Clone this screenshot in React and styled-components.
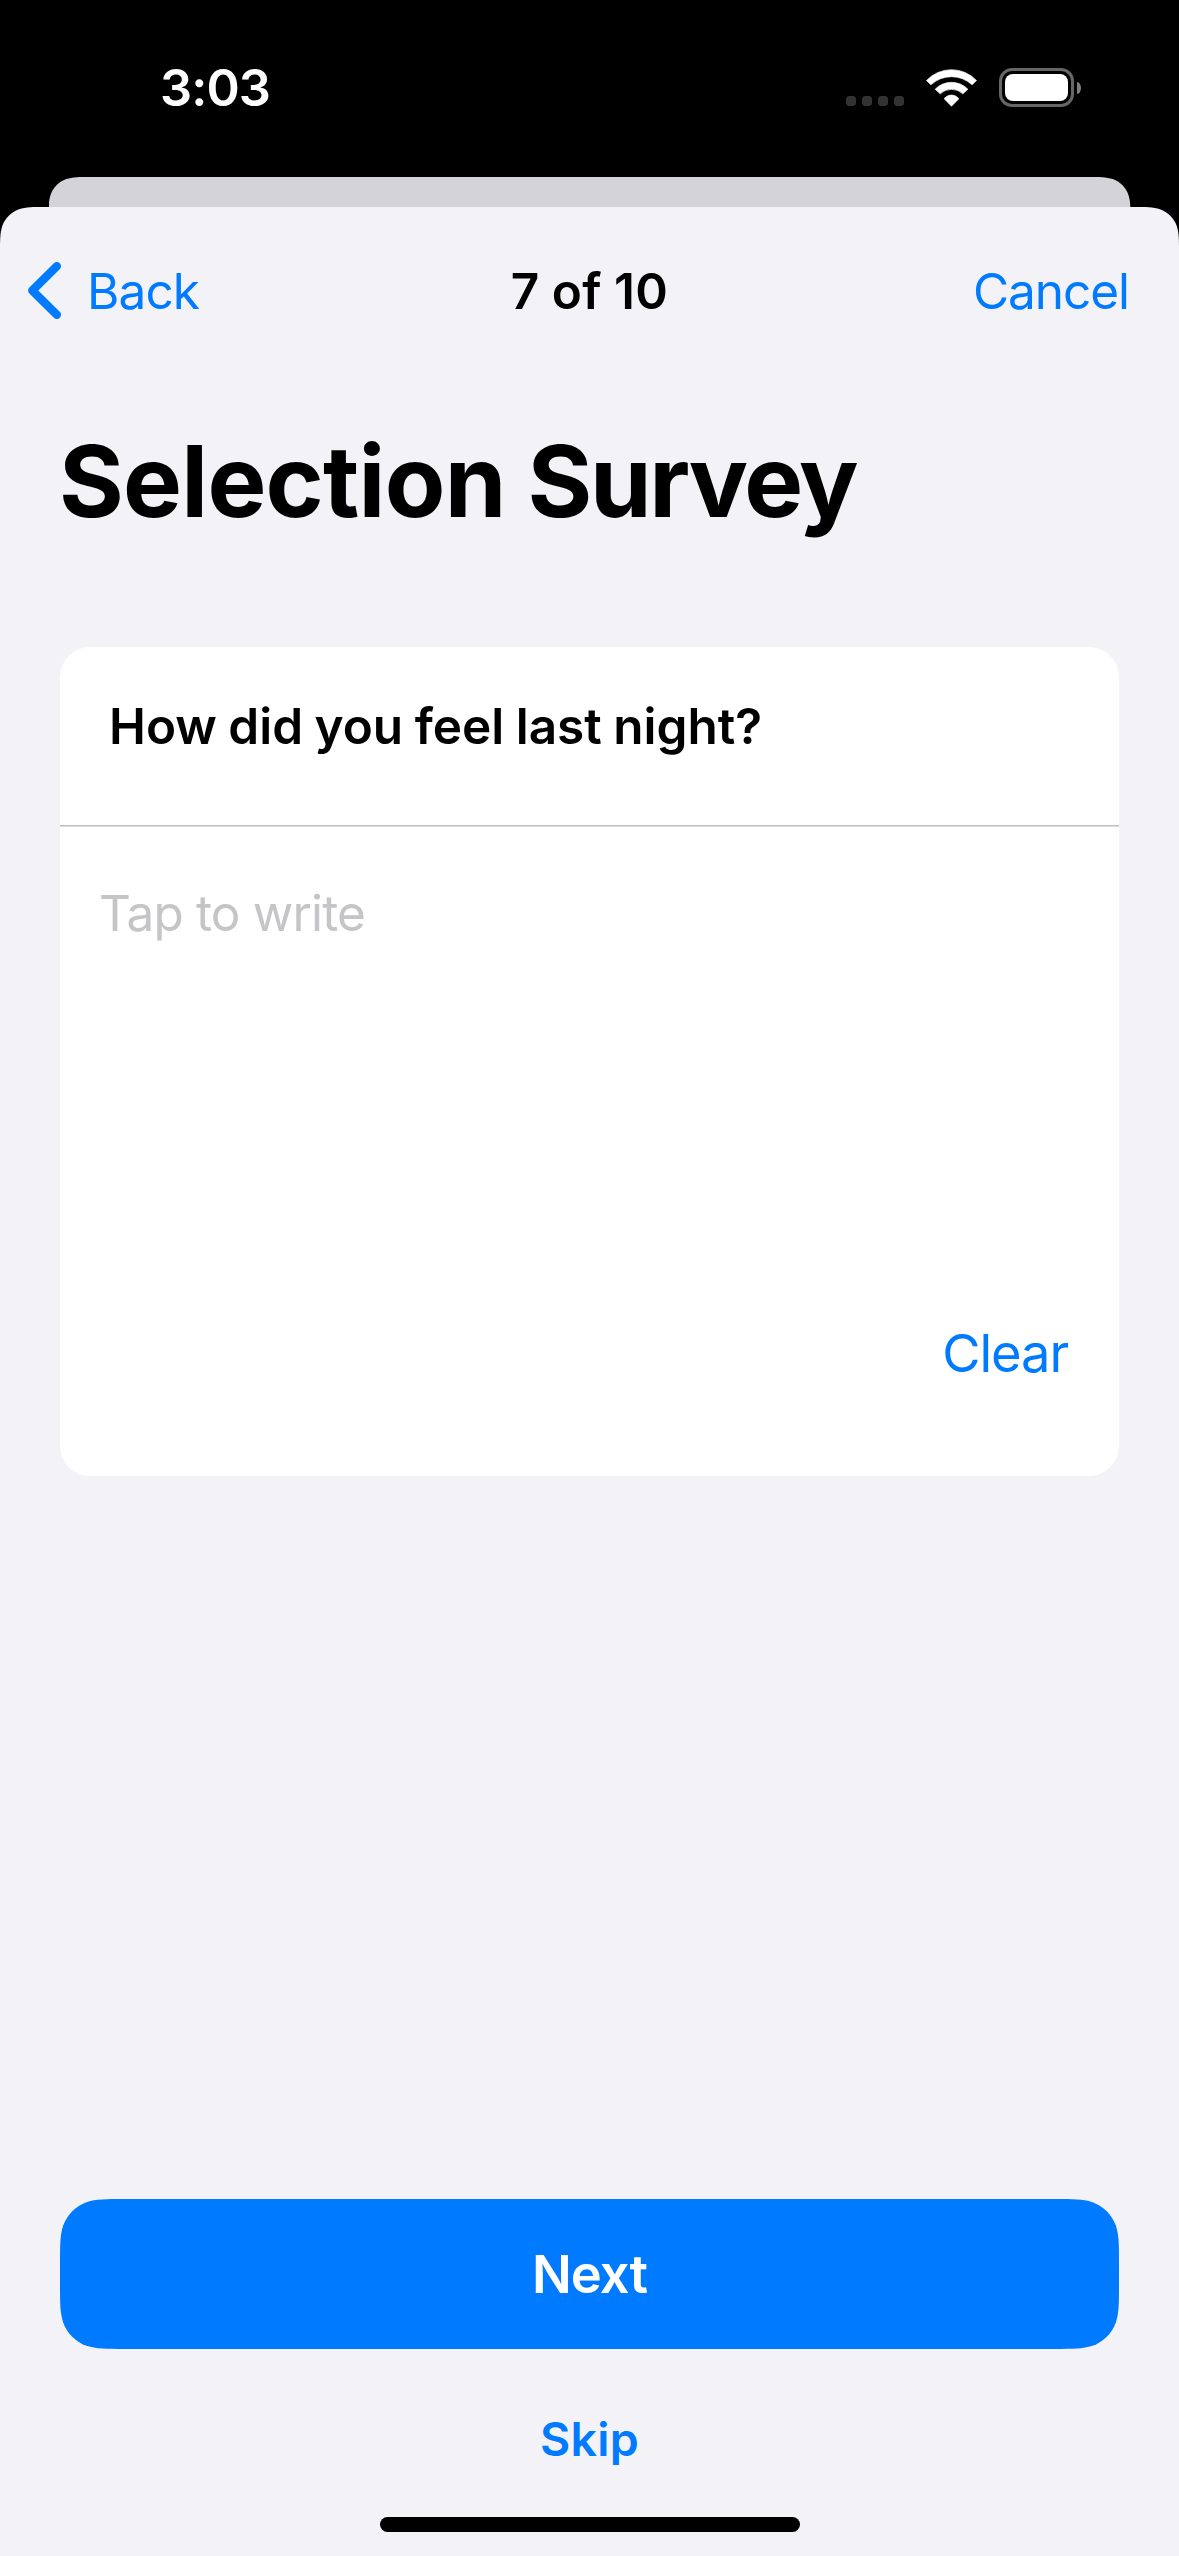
import React from 'react';
import styled, { createGlobalStyle } from 'styled-components';

const BLUE = '#007aff';
const SHEET = '#f2f2f7';

/* Outline of a rectangle with continuous-curvature corners. */
function squircle(w, h, r) {
  const p = (x, y) => `${x.toFixed(2)} ${y.toFixed(2)}`;
  const a = 1.528665 * r;
  const b = 1.088493 * r;
  const c = 0.868407 * r;
  const d = 0.631494 * r;
  const e = 0.372824 * r;
  const f = 0.16906 * r;
  const g = 0.074911 * r;
  return [
    `M${p(a, 0)}`,
    `L${p(w - a, 0)}`,
    `C${p(w - b, 0)} ${p(w - c, 0)} ${p(w - d, g)}`,
    `C${p(w - e, f)} ${p(w - f, e)} ${p(w - g, d)}`,
    `C${p(w, c)} ${p(w, b)} ${p(w, a)}`,
    `L${p(w, h - a)}`,
    `C${p(w, h - b)} ${p(w, h - c)} ${p(w - g, h - d)}`,
    `C${p(w - f, h - e)} ${p(w - e, h - f)} ${p(w - d, h - g)}`,
    `C${p(w - c, h)} ${p(w - b, h)} ${p(w - a, h)}`,
    `L${p(a, h)}`,
    `C${p(b, h)} ${p(c, h)} ${p(d, h - g)}`,
    `C${p(e, h - f)} ${p(f, h - e)} ${p(g, h - d)}`,
    `C${p(0, h - c)} ${p(0, h - b)} ${p(0, h - a)}`,
    `L${p(0, a)}`,
    `C${p(0, b)} ${p(0, c)} ${p(g, d)}`,
    `C${p(f, e)} ${p(e, f)} ${p(d, g)}`,
    `C${p(c, 0)} ${p(b, 0)} ${p(a, 0)}Z`,
  ].join('');
}

const GlobalStyle = createGlobalStyle`
  *, *::before, *::after { box-sizing: border-box; }
  body { margin: 0; background: #000; }
  h1, h2, p { margin: 0; }
  button {
    border: 0;
    padding: 0;
    background: none;
    font: inherit;
    color: inherit;
    cursor: pointer;
  }
`;

const Screen = styled.div`
  display: flex;
  flex-direction: column;
  width: 1179px;
  height: 2556px;
  background: #000;
  color: #000;
  font-family: Inter, 'Liberation Sans', sans-serif;
  font-size: 49.5px;
  line-height: 60px;
`;

const StatusBar = styled.header`
  display: flex;
  align-items: center;
  justify-content: space-between;
  height: 177px;
  padding: 0 98px 2px 160px;
  color: #fff;
`;

const Time = styled.span`
  font-size: 50.5px;
  font-weight: 600;
  line-height: 64px;
  letter-spacing: -0.9px;
`;

const StatusIcons = styled.div`
  display: flex;
  align-items: center;
  gap: 22px;
`;

const SignalDots = styled.div`
  display: flex;
  align-self: flex-end;
  gap: 6px;
  padding-bottom: 1px;
`;

const Dot = styled.i`
  width: 10px;
  height: 10px;
  border-radius: 3.5px;
  background: #333;
`;

const Battery = styled.div`
  display: flex;
  align-items: center;
  gap: 3px;
`;

const BatteryShell = styled.div`
  width: 75px;
  height: 39px;
  padding: 3px;
  border: 3px solid #666;
  border-radius: 13px;
`;

const BatteryLevel = styled.div`
  height: 100%;
  border-radius: 8px;
  background: #fff;
`;

const BatteryCap = styled.div`
  width: 4px;
  height: 12px;
  border-radius: 0 4px 4px 0 / 0 6px 6px 0;
  background: #808080;
`;

const BackSheet = styled.div`
  flex: none;
  align-self: center;
  width: 1082px;
  height: 30px;
  background: #d4d3d8;
  clip-path: path('${squircle(1082, 200, 28)}');
`;

const Sheet = styled.main`
  display: flex;
  flex: 1;
  flex-direction: column;
  background: ${SHEET};
  clip-path: path('${squircle(1179, 2500, 30)}');
`;

const NavBar = styled.nav`
  display: grid;
  grid-template-columns: 1fr auto 1fr;
  align-items: center;
  height: 167px;
  padding: 0 50px 0 24px;
`;

const NavButton = styled.button`
  display: flex;
  align-items: center;
  justify-self: ${({ $end }) => ($end ? 'end' : 'start')};
  gap: 22px;
  color: ${BLUE};
  letter-spacing: ${({ $end }) => ($end ? '-1.05px' : '-0.9px')};
`;

const NavTitle = styled.h2`
  margin-right: -26px;
  font-size: inherit;
  font-weight: 600;
  letter-spacing: 0.4px;
  word-spacing: -0.8px;
`;

const Content = styled.section`
  display: flex;
  flex: 1;
  flex-direction: column;
  padding: 47px 60px 24px;
`;

const PageTitle = styled.h1`
  margin: 0 0 106px -1px;
  font-size: 99px;
  font-weight: 700;
  line-height: 120px;
  letter-spacing: -0.75px;
  word-spacing: -0.8px;
`;

const TightWord = styled.span`
  letter-spacing: -2.3px;
`;

const Card = styled.article`
  display: flex;
  flex-direction: column;
  height: 829px;
  border-radius: 30px;
  background: #fff;
`;

const Question = styled.h2`
  height: 178px;
  padding: 49px 49px 0;
  font-size: inherit;
  font-weight: 600;
  letter-spacing: 0;
  word-spacing: -1px;
`;

const Divider = styled.div`
  height: 2px;
  border-top: 1px solid #bebec0;
  background: #dedee0;
`;

const Answer = styled.div`
  display: flex;
  flex: 1;
  flex-direction: column;
  justify-content: space-between;
  padding: 56px 51px 91px 39px;
`;

const Placeholder = styled.p`
  color: #c5c5c7;
  letter-spacing: -0.84px;
`;

const ClearButton = styled.button`
  align-self: flex-end;
  color: ${BLUE};
  font-size: 52.4px;
  line-height: 64px;
  letter-spacing: -1.1px;
`;

const Footer = styled.footer`
  display: flex;
  flex-direction: column;
  align-items: center;
  margin-top: auto;
`;

const NextButton = styled.button`
  width: 1059px;
  height: 150px;
  background: ${BLUE};
  color: #fff;
  font-size: 52.4px;
  font-weight: 600;
  line-height: 64px;
  letter-spacing: -0.9px;
  clip-path: path('${squircle(1059, 150, 42)}');
`;

const SkipButton = styled.button`
  margin: 62px 0 50px;
  color: ${BLUE};
  font-size: 46.5px;
  font-weight: 600;
  line-height: 56px;
  letter-spacing: 0.3px;
`;

const HomeIndicator = styled.div`
  width: 420px;
  height: 15px;
  border-radius: 8px;
  background: #000;
`;

const WifiIcon = () => (
  <svg width="51" height="38" viewBox="48.5 25.5 153 114" fill="#fff" stroke="#fff" strokeWidth="2" strokeLinejoin="round">
    <path d="M50 60A102.9 102.9 0 0 1 200 60L187 73A91 91 0 0 0 63 73Z" />
    <path d="M76 86A68.8 68.8 0 0 1 174 86L159 100A49.5 49.5 0 0 0 91 100Z" />
    <path d="M103 115A27 27 0 0 1 147 115L125 137Z" />
  </svg>
);

const ChevronIcon = () => (
  <svg width="41" height="61" viewBox="0 0 41 61" fill="none" stroke={BLUE} strokeWidth="8.4" strokeLinecap="round" strokeLinejoin="round">
    <path d="M32.8 6.2L8.3 30.5L32.8 54.8" />
  </svg>
);

export default function App() {
  return (
    <Screen>
      <GlobalStyle />
      <StatusBar>
        <Time>3:03</Time>
        <StatusIcons>
          <SignalDots>
            {[0, 1, 2, 3].map((n) => (
              <Dot key={n} />
            ))}
          </SignalDots>
          <WifiIcon />
          <Battery>
            <BatteryShell>
              <BatteryLevel />
            </BatteryShell>
            <BatteryCap />
          </Battery>
        </StatusIcons>
      </StatusBar>
      <BackSheet />
      <Sheet>
        <NavBar>
          <NavButton>
            <ChevronIcon />
            Back
          </NavButton>
          <NavTitle>7 of 10</NavTitle>
          <NavButton $end>Cancel</NavButton>
        </NavBar>
        <Content>
          <PageTitle>
            Selection <TightWord>Survey</TightWord>
          </PageTitle>
          <Card>
            <Question>How did you feel last night?</Question>
            <Divider />
            <Answer>
              <Placeholder>Tap to write</Placeholder>
              <ClearButton>Clear</ClearButton>
            </Answer>
          </Card>
          <Footer>
            <NextButton>Next</NextButton>
            <SkipButton>Skip</SkipButton>
            <HomeIndicator />
          </Footer>
        </Content>
      </Sheet>
    </Screen>
  );
}
